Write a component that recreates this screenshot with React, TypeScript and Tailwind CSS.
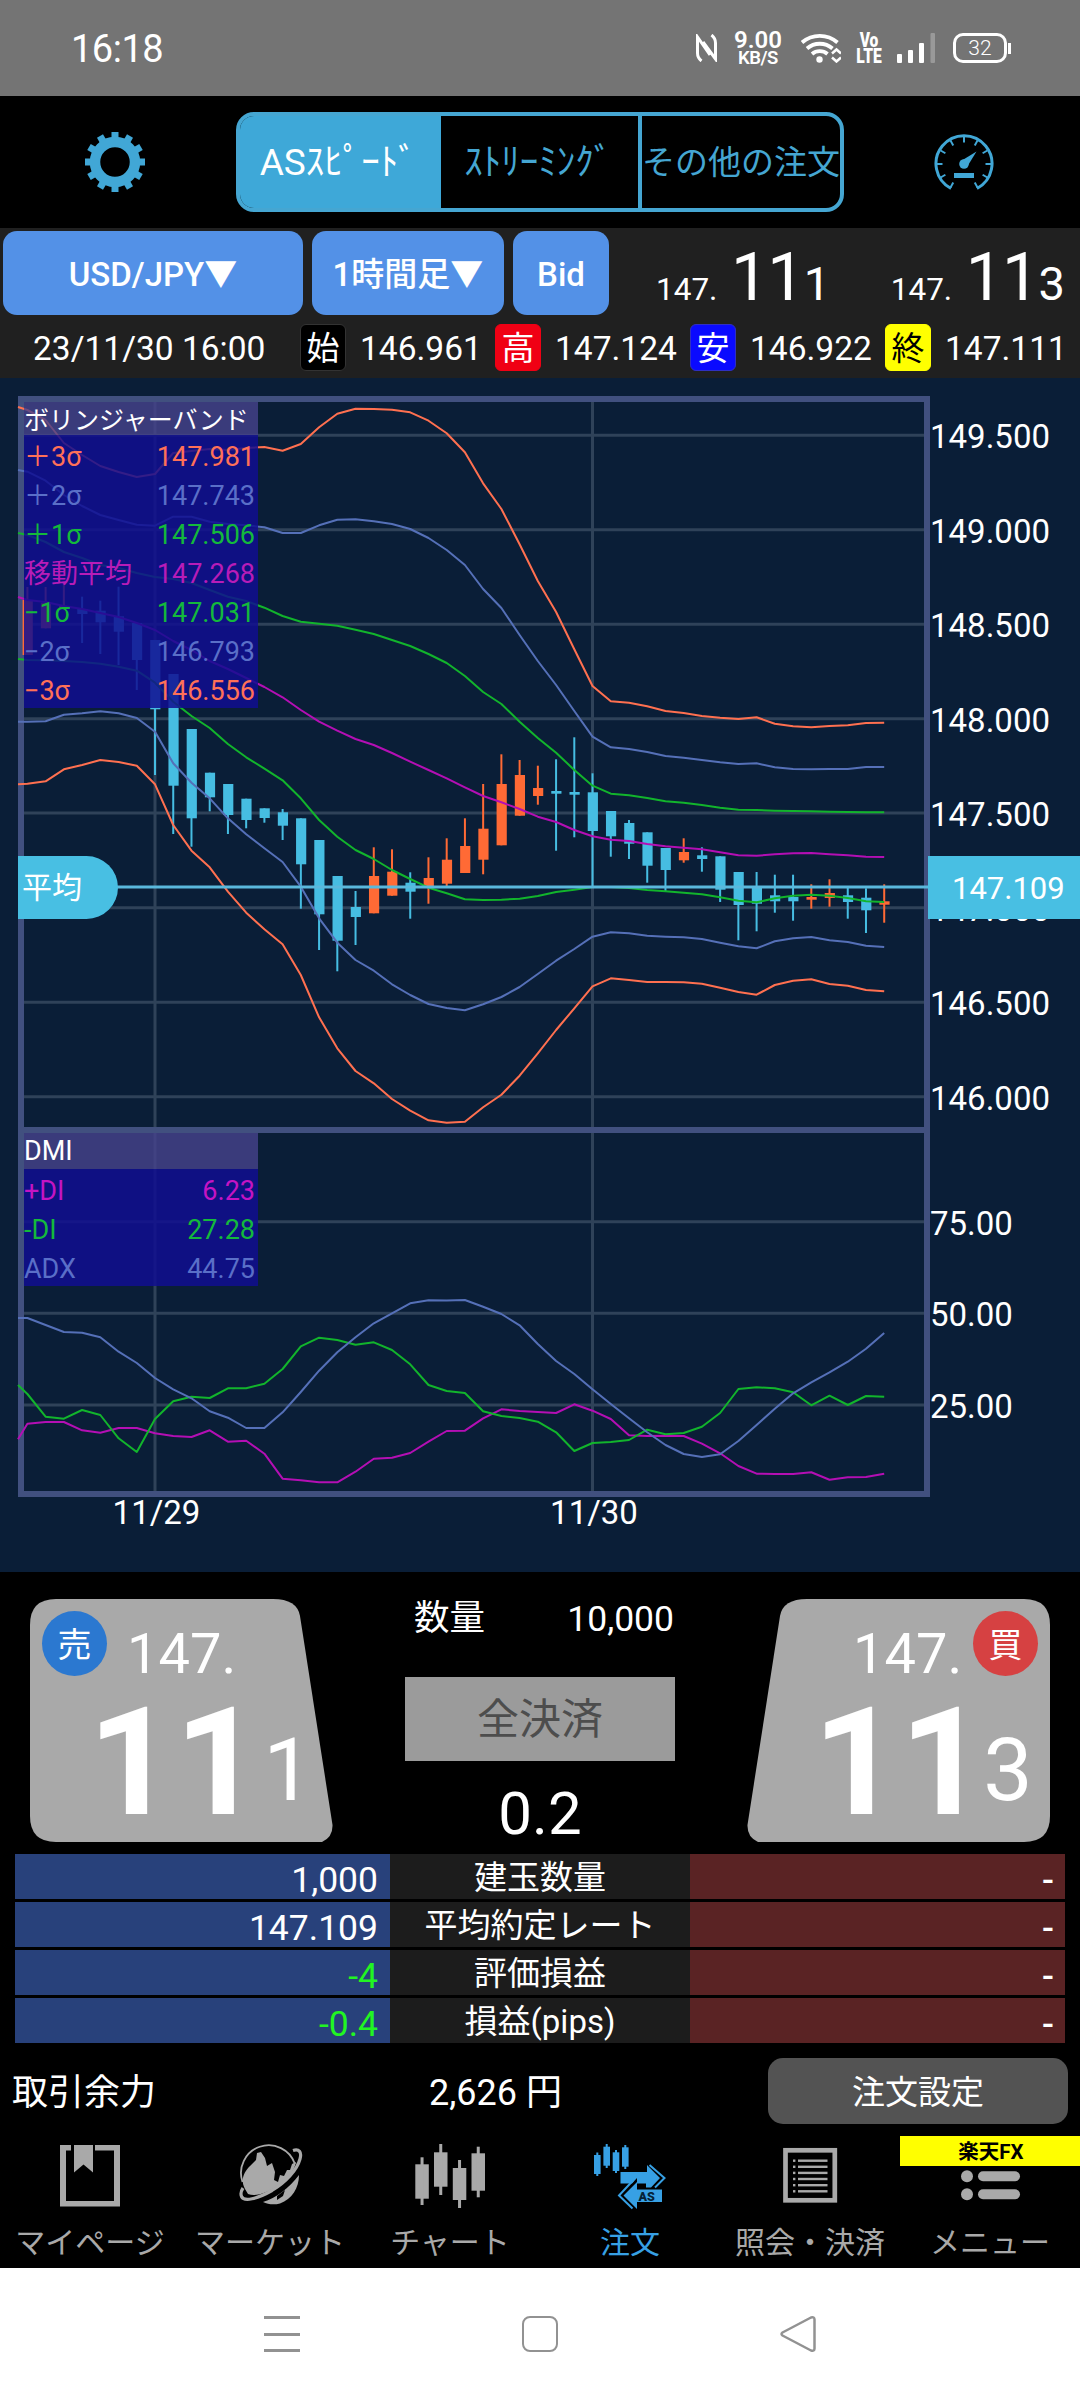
import type { ReactNode } from 'react';

const ORANGE = '#ff7050';
const BLUE = '#5570b8';
const GREEN = '#12b42c';
const MAGENTA = '#b40fb4';

const STEP = 18.23;
const FIRST_X = 27.4;
const xAt = (i: number) => FIRST_X + i * STEP;

// first value of every series is the point on the left frame, the rest are one per candle
const BANDS = [
  {
    color: ORANGE,
    ys: [407, 410, 420, 443, 455, 466, 472, 477, 474, 453, 451, 449, 450, 448, 447, 450.7, 444, 427.3, 413.7, 408.7, 409, 409.7, 412.3, 420.7, 433.3, 452.3, 483.3, 509, 544.3, 581, 612, 649.3, 686, 701.3, 702.7, 706.3, 711, 713, 716, 717.7, 719, 717.3, 723.7, 726.3, 727.3, 726, 725.3, 723, 722.7],
  },
  {
    color: BLUE,
    ys: [470, 471.7, 480.7, 495, 506, 515, 520, 524.7, 525.7, 516.7, 516.7, 521.7, 524, 525.3, 527.3, 533, 533, 525.3, 519.7, 519.3, 521.3, 524, 529, 538, 550, 565, 589, 608, 635, 661, 685, 711, 736.7, 747.3, 749, 752, 756, 757.7, 760, 762.3, 764, 763.3, 767.3, 769, 769.3, 769, 769, 767, 767],
  },
  {
    color: GREEN,
    ys: [533, 535, 542, 552, 558, 565, 568, 573, 577, 579, 583, 590, 596.7, 601, 607.7, 616, 621.7, 623.7, 625.7, 629.7, 634, 640, 646, 654, 663, 676, 692, 704, 721.7, 738, 752.7, 770, 785.7, 793.7, 795.3, 798, 801.3, 802.7, 805, 807.7, 809.7, 810, 810.7, 811, 811.3, 811.7, 812, 812.3, 812.3],
  },
  {
    color: MAGENTA,
    ys: [597, 600, 602, 606, 609, 613, 617, 623, 630, 641, 650, 661, 669, 678, 687, 697.3, 710, 721.7, 730.7, 739, 745, 753, 761.7, 770, 778.3, 787.3, 796, 802.3, 809, 816.7, 822, 830, 836.3, 839.7, 841, 844, 846.3, 847.7, 849.3, 852.3, 855.3, 855.7, 854.3, 853.3, 853, 854.3, 855.3, 856.7, 857],
  },
  {
    color: GREEN,
    ys: [659, 660, 660.3, 661, 662, 663.7, 666.7, 670.7, 682.7, 701.7, 716, 728, 744, 757.3, 768.7, 780.3, 798.3, 820, 836.7, 850, 859, 870, 879, 887.7, 893.3, 899.3, 900, 899.7, 898.7, 896, 892, 889.7, 887, 887, 888, 890, 891.3, 892.7, 894.3, 897.3, 900.7, 902.3, 898.3, 895.7, 894.7, 895.7, 898, 901.3, 902],
  },
  {
    color: BLUE,
    ys: [721.7, 721.7, 721.3, 714.7, 713.3, 711.3, 713.3, 718, 731.7, 763.3, 782.7, 798.3, 818.3, 834.3, 848.3, 862, 886.7, 918.3, 942.7, 960, 970.7, 984.3, 995, 1004, 1008, 1010.3, 1004.3, 997, 987, 974, 960.7, 949, 936.7, 932.3, 933.3, 935.7, 936.7, 937.3, 939, 942.7, 946.3, 948.3, 941.3, 938.3, 937, 940.3, 942, 945.7, 947],
  },
  {
    color: ORANGE,
    ys: [784.3, 783.7, 781.3, 769.3, 765, 760, 762, 765.7, 784.3, 825, 850.7, 867.3, 891.7, 912.7, 929.3, 944.3, 975, 1017.3, 1048.3, 1071, 1083.3, 1099, 1110.7, 1120.3, 1122.7, 1121.7, 1107.3, 1094.7, 1075.7, 1053.3, 1030, 1008.3, 986.3, 978.3, 980, 982, 982, 982.3, 983.7, 987.7, 992, 994.7, 985, 980.7, 979.3, 984, 985.7, 990, 991.3],
  },
];

const DMI = [
  {
    color: MAGENTA,
    ys: [1439.3, 1423.7, 1422, 1422, 1430.3, 1432.7, 1428, 1428, 1433.3, 1436, 1437, 1430.3, 1441.7, 1440.7, 1453.7, 1478.7, 1480.3, 1482.3, 1482.3, 1471.7, 1458.7, 1457.7, 1453, 1441.7, 1431, 1430.7, 1418.3, 1409.3, 1411, 1412, 1413, 1404.3, 1410.7, 1419, 1435.3, 1436, 1435.7, 1436, 1443.7, 1453.3, 1466, 1473.7, 1474, 1474, 1472.3, 1479.7, 1477.3, 1477, 1473.7],
  },
  {
    color: GREEN,
    ys: [1385, 1394, 1416.7, 1418.7, 1410, 1415, 1438.3, 1452, 1419, 1401.3, 1396.7, 1398, 1388.3, 1388.3, 1383.7, 1369, 1346.3, 1337.7, 1340, 1344.7, 1342.3, 1350, 1364.3, 1385, 1391, 1393, 1411.3, 1416, 1418, 1421.7, 1432.3, 1451, 1443, 1442, 1440, 1429.7, 1434.3, 1433, 1426.7, 1413, 1389, 1387.3, 1388.3, 1392.3, 1405.3, 1395.7, 1405, 1396, 1396.7],
  },
  {
    color: BLUE,
    ys: [1318, 1318, 1325, 1332, 1332.7, 1337.3, 1351.7, 1363, 1378, 1389.3, 1398.3, 1411.3, 1417.7, 1428, 1428, 1412.3, 1392, 1370.7, 1352.3, 1337.3, 1323.3, 1313.3, 1303.3, 1300.3, 1300.5, 1300, 1306.7, 1314, 1325.3, 1344, 1361, 1374, 1389.3, 1404, 1418.3, 1432.3, 1445, 1454, 1457, 1454.3, 1441, 1425, 1408.7, 1393.3, 1382.3, 1372.3, 1361.7, 1348.7, 1333],
  },
];

// [high, body top, body bottom, low, rising]
const CANDLES: [number, number, number, number, 0 | 1][] = [
  [587, 600, 655, 655, 1],
  [587, 602.7, 628.3, 628.3, 1],
  [583, 606, 609, 609, 1],
  [596.7, 609, 614, 643, 0],
  [600.7, 610.7, 622.3, 654, 0],
  [586.7, 616.3, 631.7, 665, 0],
  [623, 623, 660, 690, 0],
  [640, 640, 709.3, 775, 0],
  [674, 674, 785.7, 834, 0],
  [729, 729, 818.3, 846.7, 0],
  [772.7, 772.7, 797.3, 811.3, 0],
  [784, 784, 815, 834, 0],
  [798.7, 798.7, 820, 828.3, 0],
  [808.3, 808.3, 818, 822.7, 0],
  [809, 812.3, 825.7, 840, 0],
  [818.3, 818.3, 864.3, 908.7, 0],
  [840, 840, 914.3, 950, 0],
  [876, 876, 940.7, 971.3, 0],
  [891, 907, 917, 945, 0],
  [847.3, 876, 913.3, 913.3, 1],
  [849.3, 871.7, 895.7, 895.7, 1],
  [872.3, 882.7, 891.7, 918.7, 0],
  [857.3, 878, 887, 903.7, 1],
  [838.3, 859.7, 883.7, 886.7, 1],
  [818.3, 846, 873, 873, 1],
  [784, 828.7, 859.7, 874.3, 1],
  [754.3, 784, 845.3, 845.3, 1],
  [760, 775, 815.7, 815.7, 1],
  [765.7, 788, 796, 804.7, 1],
  [759.3, 791, 793.7, 850.7, 0],
  [737.3, 792, 794.7, 837.3, 0],
  [773.3, 792.3, 831, 887, 0],
  [811, 811, 836.3, 856.7, 0],
  [820, 823, 843.7, 859, 0],
  [832.3, 832.3, 865.7, 882.7, 0],
  [848, 848, 870, 891.7, 0],
  [838.3, 852, 860.3, 862.7, 1],
  [847.3, 855.3, 859, 871.7, 0],
  [856.3, 856.3, 889.7, 902, 0],
  [872, 872, 905, 940.3, 0],
  [872, 887, 903.7, 931.3, 0],
  [874.7, 895.3, 901.3, 912.7, 0],
  [874.7, 897, 901.3, 920.7, 0],
  [884.3, 897, 899.7, 908.7, 1],
  [879.3, 893, 898, 906.7, 1],
  [887, 895.3, 902, 918.7, 0],
  [888.3, 897.7, 910.3, 933, 0],
  [884.3, 901.3, 904.7, 922.7, 1],
];

const PRICE_TICKS: [string, number][] = [
  ['149.500', 435.3],
  ['149.000', 529.7],
  ['148.500', 624.3],
  ['148.000', 718.7],
  ['147.500', 813],
  ['147.000', 907.7],
  ['146.500', 1002.3],
  ['146.000', 1096.7],
];
const DMI_TICKS: [string, number][] = [
  ['75.00', 1221.7],
  ['50.00', 1313.3],
  ['25.00', 1405],
];

const OHLC = [
  { mark: '始', value: '146.961', cls: 'bg-black text-white border-[#333]' },
  { mark: '高', value: '147.124', cls: 'bg-[#f00014] text-white border-[#f00014]' },
  { mark: '安', value: '146.922', cls: 'bg-[#0a0aff] text-white border-[#3030c0]' },
  { mark: '終', value: '147.111', cls: 'bg-[#ffff00] text-black border-[#ffff00]' },
];

const POSITIONS = [
  { label: '建玉数量', sell: '1,000', buy: '-' },
  { label: '平均約定レート', sell: '147.109', buy: '-' },
  { label: '評価損益', sell: '-4', buy: '-', loss: true },
  { label: '損益(pips)', sell: '-0.4', buy: '-', loss: true },
];

export default function App() {
  return (
    <div className="flex h-[2400px] w-[1080px] flex-col overflow-hidden bg-black font-['Roboto','Noto_Sans_CJK_JP',sans-serif] leading-none whitespace-nowrap text-white">
      <StatusBar />
      <Header />
      <Toolbar />
      <Chart />
      <TradePanel />
      <PositionTable />
      <AccountRow />
      <BottomNav />
      <SystemNav />
    </div>
  );
}

function StatusBar() {
  return (
    <div className="flex h-24 shrink-0 items-center bg-[#747474] pr-[69px] pl-[71px]">
      <span className="pt-px text-[38px] tracking-[-0.5px]">16:18</span>
      <div className="ml-auto flex items-center">
        <svg width="21" height="28" viewBox="0 0 21 28" fill="none" stroke="#fff" strokeWidth="3">
          <path d="M5.500 27C3 25 1.500 23 1.500 19V3L14 21" />
          <path d="M15.500 1C18 3 19.500 5 19.500 9V25L7 8" />
        </svg>
        <div className="ml-[15px] flex w-[52px] flex-col items-center font-semibold">
          <span className="text-[24px] leading-[20px]">9.00</span>
          <span className="text-[18.500px] leading-[17px] tracking-[-0.5px]">KB/S</span>
        </div>
        <svg className="ml-[17px]" width="40" height="30" viewBox="0 0 40 30" fill="none" stroke="#fff" strokeWidth="3.800">
          <path d="M1 9.500a27 27 0 0 1 35.500 0" />
          <path d="M6 15.500a19.500 19.500 0 0 1 25.500 0" />
          <path d="M11 21a12 12 0 0 1 15.500 0" />
          <circle cx="18.500" cy="26.500" r="3.200" fill="#fff" stroke="none" />
          <path d="M31 20.500l4.500-4 4.500 4M31 24.500l4.500 4 4.500-4" strokeWidth="2.500" />
        </svg>
        <div className="ml-[14px] flex w-[28px] origin-center scale-x-[.78] flex-col items-center font-black">
          <span className="text-[20px] leading-[16px]">Vo</span>
          <span className="text-[20px] leading-[16px]">LTE</span>
        </div>
        <svg className="ml-[14px]" width="38" height="30" viewBox="0 0 38 30" fill="#fff">
          <rect x="0" y="21" width="5" height="9" rx="1" />
          <rect x="11" y="17" width="5" height="13" rx="1" />
          <rect x="22" y="10" width="5" height="20" rx="1" />
          <rect x="33.500" y="0" width="4.500" height="30" rx="1" fill="#999" />
        </svg>
        <div className="ml-[18px] flex h-[30px] w-[54px] items-center justify-center rounded-[10px] border-3 border-white text-[21px] font-light">
          32
        </div>
        <div className="ml-[1px] h-[11px] w-[3px] bg-white" />
      </div>
    </div>
  );
}

function Header() {
  return (
    <div className="flex h-[132px] shrink-0 items-center bg-black">
      <div className="flex w-[236px] pl-[85px]">
        <GearIcon />
      </div>
      <div className="flex h-[100px] w-[608px] overflow-hidden rounded-[18px] border-4 border-[#45a6d2] text-[37px] text-[#45a6d2]">
        <div className="flex w-[201px] items-center justify-center bg-[#3ea8d8] pt-px pr-1 text-white">ASｽﾋﾟｰﾄﾞ</div>
        <div className="flex w-[198px] items-center justify-center pt-px pr-[2px]">ｽﾄﾘｰﾐﾝｸﾞ</div>
        <div className="flex flex-1 items-center justify-center border-l-4 border-[#45a6d2] text-[33px]">
          その他の注文
        </div>
      </div>
      <div className="flex flex-1 justify-center pt-1 pl-[4px]">
        <GaugeIcon />
      </div>
    </div>
  );
}

function GearIcon() {
  return (
    <svg width="60" height="60" viewBox="-30 -30 60 60" fill="#41a7d6">
      {Array.from({ length: 12 }, (_, i) => (
        <rect key={i} x="-3.500" y="-30" width="7" height="10" transform={`rotate(${i * 30})`} />
      ))}
      <circle r="20" fill="none" stroke="#41a7d6" strokeWidth="10.500" />
    </svg>
  );
}

function GaugeIcon() {
  const ticks = [-150, -120, -90, -60, -30, 0, 30, 60, 90, 120, 150];
  return (
    <svg width="60" height="60" viewBox="-30 -30 60 60" fill="none" stroke="#41a7d6">
      <path d="M-13 24.500A28 28 0 1 1 13 24.500" strokeWidth="3" />
      {ticks.map((a) => (
        <path key={a} d="M0 -27V-21.500" strokeWidth="2" transform={`rotate(${a})`} />
      ))}
      <path d="M-3 -3L12.500 -12.500L3 3Z" fill="#41a7d6" stroke="none" />
      <circle r="4.800" fill="#41a7d6" stroke="none" />
      <rect x="-10" y="9" width="20" height="5" fill="#41a7d6" stroke="none" />
    </svg>
  );
}

function Toolbar() {
  return (
    <div className="flex h-[150px] shrink-0 flex-col bg-[#202020]">
      <div className="flex h-[88px] items-start pt-[3px] pl-[3px]">
        <Picker className="w-[300px]">USD/JPY▼</Picker>
        <Picker className="ml-[9px] w-[192px]">1時間足▼</Picker>
        <Picker className="ml-[9px] w-[96px]">Bid</Picker>
        <Quote className="ml-[47px]" last="1" />
        <Quote className="ml-[59px]" last="3" />
      </div>
      <div className="flex h-[62px] items-center pl-[33px] text-[33.500px]">
        <span className="w-[268px] pt-[4px]">23/11/30 16:00</span>
        {OHLC.map((o) => (
          <div key={o.mark} className="flex w-[195px] shrink-0 items-center">
            <span className={`flex h-[47px] w-[46px] items-center justify-center rounded-[6px] border pt-[2px] text-[33px] ${o.cls}`}>
              {o.mark}
            </span>
            <span className="ml-[14px] pt-[4px]">{o.value}</span>
          </div>
        ))}
      </div>
    </div>
  );
}

function Picker({ className, children }: { className: string; children: ReactNode }) {
  return (
    <button className={`flex h-[84px] shrink-0 items-center justify-center rounded-[14px] bg-[#5391e7] pt-[2px] text-[33px] font-medium ${className}`}>
      {children}
    </button>
  );
}

function Quote({ className, last }: { className: string; last: string }) {
  return (
    <div className={`flex shrink-0 items-baseline pt-[13px] ${className}`}>
      <span className="w-[75px] text-[31.500px]">147.</span>
      <span className="text-[66.500px] tracking-[-1px]">11</span>
      <span className="w-[28px] text-[47px]">{last}</span>
    </div>
  );
}

function line(ys: number[]) {
  return ys.map((y, i) => `${i === 0 ? 18 : xAt(i - 1).toFixed(1)},${y}`).join(' ');
}

function Chart() {
  return (
    <div className="relative h-[1194px] shrink-0 bg-[#0a1e37]">
      <svg width="1080" height="1194" viewBox="0 378 1080 1194" className="block">
        <g stroke="#2f4259" strokeWidth="3">
          {[...PRICE_TICKS, ...DMI_TICKS].map(([label, y]) => (
            <line key={label} x1="24" x2="924" y1={y} y2={y} />
          ))}
          <line x1="155" x2="155" y1="402" y2="1491" />
          <line x1="592.500" x2="592.500" y1="402" y2="1491" />
        </g>
        <g fill="none" stroke="#41507f" strokeWidth="6">
          <rect x="21" y="399" width="906" height="1095" />
          <line x1="21" x2="927" y1="1130" y2="1130" />
        </g>

        {CANDLES.map(([high, top, bottom, low, up], i) => (
          <g key={i} fill={up ? '#ff6a35' : '#46bde2'}>
            <rect x={xAt(i) - 1} y={high} width="2" height={low - high} />
            <rect x={xAt(i) - 4.8} y={top} width="10.200" height={bottom - top} />
          </g>
        ))}
        <g fill="none" strokeWidth="2" strokeLinejoin="round">
          {[...BANDS, ...DMI].map((s, i) => (
            <polyline key={i} points={line(s.ys)} stroke={s.color} />
          ))}
        </g>
        <line x1="110" x2="930" y1="887" y2="887" stroke="#5ab8dc" strokeWidth="3" />

        <g fill="#fff" fontSize="33" fontFamily="Roboto, sans-serif">
          {[...PRICE_TICKS, ...DMI_TICKS].map(([label, y]) => (
            <text key={label} x="930" y={y + 13}>
              {label}
            </text>
          ))}
          <text x="156.500" y="1524" textAnchor="middle">
            11/29
          </text>
          <text x="594" y="1524" textAnchor="middle">
            11/30
          </text>
        </g>
      </svg>

      <Legend
        className="top-[24px]"
        header={<div className="h-[33px] bg-[#46428c]/80 pt-[6px] text-[25px]">ボリンジャーバンド</div>}
        rows={[
          ['＋3σ', '147.981', 'text-[#ff7058]'],
          ['＋2σ', '147.743', 'text-[#5a6fc8]'],
          ['＋1σ', '147.506', 'text-[#14b93c]'],
          ['移動平均', '147.268', 'text-[#b81cb8]'],
          ['−1σ', '147.031', 'text-[#14b93c]'],
          ['−2σ', '146.793', 'text-[#5a6fc8]'],
          ['−3σ', '146.556', 'text-[#ff7058]'],
        ]}
      />
      <Legend
        className="top-[755px]"
        header={<div className="h-[36px] bg-[#46428c]/80 pt-[5px] text-[27px]">DMI</div>}
        rows={[
          ['+DI', '6.23', 'text-[#c414c4]'],
          ['-DI', '27.28', 'text-[#14b93c]'],
          ['ADX', '44.75', 'text-[#5a6fc8]'],
        ]}
      />

      <div className="absolute top-[478px] left-[18px] flex h-[63px] w-[100px] items-center rounded-r-full bg-[#48bfe3] pt-px pl-[4px] text-[30px]">
        平均
      </div>
      <div className="absolute top-[478px] right-0 flex h-[63px] w-[152px] items-center bg-[#48bfe3] pt-[2px] pl-[24px] text-[31px]">
        147.109
      </div>
    </div>
  );
}

function Legend({ className, header, rows }: { className: string; header: ReactNode; rows: string[][] }) {
  return (
    <div className={`absolute left-[24px] w-[234px] ${className}`}>
      {header}
      <div className="bg-[#110e90]/85">
        {rows.map(([name, value, color]) => (
          <div key={name} className={`flex h-[39px] items-start justify-between pt-[9px] pr-[3px] text-[27px] ${color}`}>
            <span>{name}</span>
            <span>{value}</span>
          </div>
        ))}
      </div>
    </div>
  );
}

function TradePanel() {
  return (
    <div className="flex h-[282px] shrink-0 items-start bg-black px-[30px] pt-[27px]">
      <div className="relative h-[243px] w-[303px] shrink-0">
        <CardShape />
        <div className="absolute top-[12px] left-[12px] flex size-[65px] items-center justify-center rounded-full bg-[#2b78d0] pt-[3px] text-[34px]">
          売
        </div>
        <div className="relative pt-[27px] pl-[97px] text-[56px]">147.</div>
        <div className="relative mt-[5px] flex pl-[58px]">
          <span className="text-[151px] font-bold">11</span>
          <span className="ml-[2px] pt-[39px] text-[88px]">1</span>
        </div>
      </div>

      <div className="flex flex-1 flex-col items-center">
        <div className="flex w-[260px] translate-x-[4px] justify-between text-[35.500px]">
          <span className="pt-[2px]">数量</span>
          <span className="pt-[3px] text-[35.500px]">10,000</span>
        </div>
        <button className="mt-[39px] flex h-[84px] w-[270px] items-center justify-center bg-[#9b9b9b] pt-[2px] text-[42px] text-[#4d4d4d]">
          全決済
        </button>
        <span className="mt-[23px] text-[60px]">0.2</span>
      </div>

      <div className="relative h-[243px] w-[303px] shrink-0">
        <CardShape flip />
        <div className="absolute top-[12px] right-[12px] flex size-[65px] items-center justify-center rounded-full bg-[#d64142] pt-[3px] text-[34px]">
          買
        </div>
        <div className="relative pt-[27px] pl-[106px] text-[56px]">147.</div>
        <div className="relative mt-[5px] flex pl-[66px]">
          <span className="text-[151px] font-bold">11</span>
          <span className="-ml-[3px] pt-[39px] text-[88px]">3</span>
        </div>
      </div>
    </div>
  );
}

function CardShape({ flip }: { flip?: boolean }) {
  return (
    <svg width="303" height="243" viewBox="0 0 303 243" className={`absolute inset-0 ${flip ? '-scale-x-100' : ''}`}>
      <path
        d="M26 0H243Q267 0 270 17L302.500 226Q303 238 292 243H26Q0 243 0 217V26Q0 0 26 0Z"
        fill="#a9a9a9"
      />
    </svg>
  );
}

function PositionTable() {
  return (
    <div className="flex h-[192px] shrink-0 flex-col gap-[3px] px-[15px]">
      {POSITIONS.map((p) => (
        <div key={p.label} className="flex h-[45px]">
          <div className={`w-[375px] bg-[#28417b] pt-[9px] pr-[12px] text-right text-[35.500px] ${p.loss ? 'text-[#22f522]' : ''}`}>
            {p.sell}
          </div>
          <div className="w-[300px] bg-[#1c1c1c] pt-[7px] text-center text-[33px]">{p.label}</div>
          <div className="w-[375px] bg-[#5a2324] pt-[9px] pr-[11px] text-right text-[35px] font-medium">{p.buy}</div>
        </div>
      ))}
    </div>
  );
}

function AccountRow() {
  return (
    <div className="flex h-[90px] shrink-0 items-center pr-[12px] pl-[12px]">
      <span className="w-[417px] pt-[3px] text-[36px]">取引余力</span>
      <span className="pt-[3px] text-[36px]">2,626 円</span>
      <button className="ml-auto flex h-[66px] w-[300px] items-center justify-center rounded-[15px] bg-[#535353] pt-[3px] text-[33px]">
        注文設定
      </button>
    </div>
  );
}

function NavItem({ label, active, children }: { label: string; active?: boolean; children: ReactNode }) {
  return (
    <div className={`flex w-[180px] flex-col items-center pt-[6px] ${active ? 'text-[#37a0e4]' : 'text-[#a9a9a9]'}`}>
      <svg width="80" height="68" viewBox="0 0 80 68" fill="currentColor">
        {children}
      </svg>
      <span className="mt-[18px] text-[30px]">{label}</span>
    </div>
  );
}

// [x, width, body top, body bottom, wick top, wick bottom]
const NAV_CANDLES = [
  [5.3, 13.5, 22.3, 56.7, 15.3, 63],
  [24, 13.5, 10.3, 44.7, 2, 53],
  [42.8, 13.5, 26, 58, 18, 66],
  [61.5, 13.5, 11.3, 48.7, 4.7, 55.3],
];
const ORDER_CANDLES = [
  [4, 6.6, 13, 32, 10.5, 34],
  [13.4, 6.6, 4.7, 23.7, 2, 26],
  [22.7, 6.6, 10.3, 29, 8, 31],
  [32, 6.6, 5.3, 24.7, 3, 27],
];

function MiniCandles({ data, wick }: { data: number[][]; wick: number }) {
  return (
    <>
      {data.map(([x, w, t, b, wt, wb]) => (
        <g key={x}>
          <rect x={x} y={t} width={w} height={b - t} />
          <rect x={x + (w - wick) / 2} y={wt} width={wick} height={wb - wt} />
        </g>
      ))}
    </>
  );
}

function BottomNav() {
  return (
    <div className="relative flex h-[132px] shrink-0 bg-black">
      <NavItem label="マイページ">
        <path d="M21 3H10V64.500H70V3H45V8.500H64V59H16V8.500H21Z" />
        <path d="M24 3H43V30.500L33.500 22.500L24 30.500Z" />
      </NavItem>
      <NavItem label="マーケット">
        <path
          d="M12.500 40A27.500 27.500 0 0 1 65 22"
          fill="none"
          stroke="currentColor"
          strokeWidth="1.800"
        />
        <path d="M15 47C10 38 14 30 20 24L26 18L27 11L31 10L35 16L37 24L42 21L45 30L44 38L48 40L50 33L54 34L57 28L60 28L62 22L66 20C64 30 58 36 50 42C38 51 26 55 18 52Z" />
        <path
          d="M63 8.500C69 6.500 72 10 70 17C67 28 56 40 42 48.500C27 57 14 60 11.500 54.500C10.500 52 11 49 13 46"
          fill="none"
          stroke="currentColor"
          strokeWidth="3.200"
        />
        <path d="M33 60C46 56 59 46 69 33C69 46 62 57 50 61.500C44 63 38 62.500 33 60Z" />
        <path d="M47 54L55 48L53 54L47 58Z" fill="#000" />
      </NavItem>
      <NavItem label="チャート">
        <MiniCandles data={NAV_CANDLES} wick={3} />
      </NavItem>
      <NavItem label="注文" active>
        <MiniCandles data={ORDER_CANDLES} wick={2} />
        <path d="M30.500 30H57V23L70 36L61 45.500H56V41.500H47V36L42 41.500H30.500Z" />
        <path d="M59.500 23L74.500 36L65 45.500" fill="none" stroke="currentColor" strokeWidth="2" />
        <path d="M33.500 53.500L47 40V47.500H72V60H47V67Z" />
        <path d="M43 38.500L29 53.500L42.500 66.500" fill="none" stroke="currentColor" strokeWidth="2" />
        <text x="48.500" y="58.500" fontSize="12.500" fontWeight="900" fill="#052338" fontFamily="Roboto, sans-serif">
          AS
        </text>
      </NavItem>
      <NavItem label="照会・決済">
        <rect x="15.500" y="8.300" width="49.300" height="50" fill="none" stroke="currentColor" strokeWidth="4.700" />
        {[18.7, 24.8, 30.9, 37, 43.2, 49.3].map((y) => (
          <g key={y}>
            <rect x="23" y={y - 1.2} width="2.400" height="2.400" />
            <rect x="28" y={y - 1.2} width="29.500" height="2.400" />
          </g>
        ))}
      </NavItem>
      <NavItem label="メニュー">
        <circle cx="17" cy="34.300" r="6" />
        <rect x="28" y="29.300" width="42" height="10" rx="5" />
        <circle cx="17" cy="52.300" r="6" />
        <rect x="28" y="47.300" width="42" height="10" rx="5" />
      </NavItem>
      <div className="absolute top-0 right-0 flex h-[30px] w-[180px] items-center justify-center bg-[#ffff00] pt-[2px] pl-[2px] text-[20.500px] font-bold text-black">
        楽天FX
      </div>
    </div>
  );
}

function SystemNav() {
  return (
    <div className="flex h-[132px] shrink-0 items-center justify-between bg-white px-[264px]">
      <div className="flex w-[36px] flex-col gap-[13.500px]">
        <div className="h-[3px] bg-[#929292]" />
        <div className="h-[3px] bg-[#929292]" />
        <div className="h-[3px] bg-[#929292]" />
      </div>
      <div className="size-[36px] rounded-[8px] border-[2.500px] border-[#929292]" />
      <svg width="36" height="36" viewBox="0 0 36 36" fill="none" stroke="#929292" strokeWidth="2.500" strokeLinejoin="round">
        <path d="M2.500 16.500L31 1.500Q34.500 0.500 34.500 3.500V32.500Q34.500 35.500 31 34.500L2.500 19.500Q0.500 18 2.500 16.500Z" />
      </svg>
    </div>
  );
}
